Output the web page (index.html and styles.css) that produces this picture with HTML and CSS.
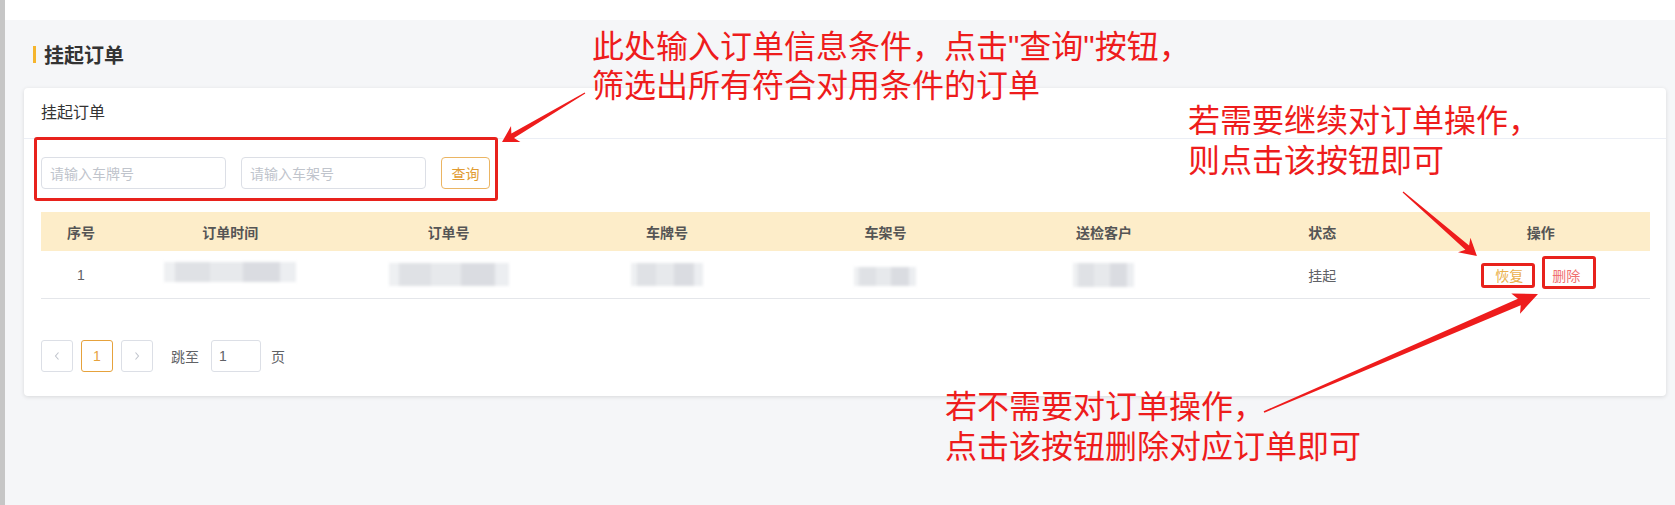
FILE: index.html
```html
<!DOCTYPE html>
<html lang="zh-CN">
<head>
<meta charset="utf-8">
<title>挂起订单</title>
<link rel="stylesheet" href="styles.css">
</head>
<body>
<div class="app">
  <div class="side-stripe"></div>
  <div class="main">
    <div class="topbar"></div>
    <div class="content">
      <h1 class="page-title"><span class="title-bar"></span>挂起订单</h1>
      <section class="card">
        <div class="card-header">挂起订单</div>
        <div class="card-body">
          <div class="search">
            <input class="input" type="text" placeholder="请输入车牌号">
            <input class="input" type="text" placeholder="请输入车架号">
            <button class="btn-query" type="button">查询</button>
          </div>
          <div class="table">
            <div class="tr th">
              <div class="cell">序号</div>
              <div class="cell">订单时间</div>
              <div class="cell">订单号</div>
              <div class="cell">车牌号</div>
              <div class="cell">车架号</div>
              <div class="cell">送检客户</div>
              <div class="cell">状态</div>
              <div class="cell">操作</div>
            </div>
            <div class="tr td">
              <div class="cell">1</div>
              <div class="cell"><span class="blur blur-time"></span></div>
              <div class="cell"><span class="blur blur-order"></span></div>
              <div class="cell"><span class="blur blur-plate"></span></div>
              <div class="cell"><span class="blur blur-vin"></span></div>
              <div class="cell"><span class="blur blur-client"></span></div>
              <div class="cell">挂起</div>
              <div class="cell ops">
                <button class="link link-restore" type="button">恢复</button>
                <button class="link link-delete" type="button">删除</button>
              </div>
            </div>
          </div>
          <div class="pager">
            <button class="pg-btn" type="button"><svg width="8" height="10" viewBox="0 0 8 10"><polyline points="5.5,1.5 2.5,5 5.5,8.5" fill="none" stroke="#c0c4cc" stroke-width="1.1"/></svg></button>
            <button class="pg-btn active" type="button">1</button>
            <button class="pg-btn" type="button"><svg width="8" height="10" viewBox="0 0 8 10"><polyline points="2.5,1.5 5.5,5 2.5,8.5" fill="none" stroke="#c0c4cc" stroke-width="1.1"/></svg></button>
            <span class="jump-label">跳至</span>
            <input class="jump-input" type="text" value="1">
            <span class="jump-unit">页</span>
          </div>
        </div>
      </section>
    </div>
  </div>
</div>

<div class="annotations">
  <div class="note note-1"><div class="note-line">此处输入订单信息条件，点击"查询"按钮，</div><div class="note-line">筛选出所有符合对用条件的订单</div></div>
  <div class="note note-2"><div class="note-line">若需要继续对订单操作，</div><div class="note-line">则点击该按钮即可</div></div>
  <div class="note note-3"><div class="note-line">若不需要对订单操作，</div><div class="note-line">点击该按钮删除对应订单即可</div></div>
  <div class="mark mark-search"></div>
  <div class="mark mark-restore"></div>
  <div class="mark mark-delete"></div>
  <svg class="arrows" width="1675" height="505" viewBox="0 0 1675 505">
    <polygon transform="translate(585,93) rotate(149.4)" points="0,-0.6 84,-2.6 80.5,-9.2 96.4,0 80.5,9.2 84,2.6 0,0.6" fill="#ee1c1c"/>
    <polygon transform="translate(1403,192) rotate(40.9)" points="0,-0.6 85,-2.8 81,-9.5 97.8,0 81,9.5 85,2.8 0,0.6" fill="#ee1c1c"/>
    <polygon transform="translate(1264,412) rotate(-23.3)" points="0,-0.8 278,-3.6 274,-11 298.3,0 274,11 278,3.6 0,0.8" fill="#ee1c1c"/>
  </svg>
</div>
</body>
</html>
```

FILE: styles.css
```css
* { box-sizing: border-box; }

html, body {
  margin: 0;
  padding: 0;
}

body {
  position: relative;
  width: 1675px;
  height: 505px;
  overflow: hidden;
  background: #f5f6f8;
  font-family: "Liberation Sans", "Noto Sans CJK SC", sans-serif;
  color: #606266;
}

.app {
  display: flex;
  height: 505px;
}

.side-stripe {
  flex: none;
  width: 5px;
  background: #c6c6c6;
}

.main {
  flex: 1;
  display: flex;
  flex-direction: column;
}

.topbar {
  height: 20px;
  background: #fff;
}

.content {
  padding: 20px 9px 0 19px;
}

.page-title {
  margin: 0 0 20px 9px;
  height: 28px;
  display: flex;
  align-items: center;
  gap: 8px;
  font-size: 20px;
  font-weight: bold;
  color: #333;
  font-family: "Noto Sans CJK SC", sans-serif;
}

.title-bar {
  width: 3px;
  height: 17px;
  background: #f5b52e;
}

.card {
  background: #fff;
  border-radius: 4px;
  box-shadow: 0 1px 4px rgba(0, 0, 0, 0.12);
}

.card-header {
  height: 51px;
  line-height: 46px;
  padding-left: 17px;
  font-size: 16px;
  color: #333;
  border-bottom: 1px solid #ebeef5;
  font-family: "Noto Sans CJK SC", sans-serif;
}

.card-body {
  padding: 18px 16px 24px 17px;
}

.search {
  display: flex;
  gap: 15px;
}

.input {
  width: 185px;
  height: 32px;
  border: 1px solid #dcdfe6;
  border-radius: 4px;
  padding: 0 8px;
  font-size: 14px;
  font-family: "Noto Sans CJK SC", sans-serif;
  color: #606266;
  outline: none;
  background: #fff;
}

.input::placeholder {
  color: #c0c4cc;
}

.btn-query {
  width: 49px;
  height: 32px;
  border: 1px solid #ebb563;
  border-radius: 4px;
  background: #fff;
  color: #e19b30;
  font-size: 14px;
  font-family: "Noto Sans CJK SC", sans-serif;
  padding: 0;
}

.table {
  margin-top: 23px;
}

.tr {
  display: grid;
  grid-template-columns: 80px repeat(7, 1fr);
  align-items: center;
}

.cell {
  text-align: center;
  font-size: 14px;
  display: flex;
  justify-content: center;
  align-items: center;
}

.th {
  height: 39px;
  background: #fdedc9;
  color: #555;
  font-weight: bold;
}

.td {
  height: 48px;
  border-bottom: 1px solid #e4e6ea;
  color: #606266;
}

.blur {
  display: inline-block;
  filter: blur(1.6px);
  background: linear-gradient(90deg, #eef0f2 0 8%, #dfe1e5 8% 35%, #e7e9ec 35% 60%, #dadce1 60% 88%, #eceef1 88% 100%);
}

.blur-time { width: 132px; height: 20px; margin-top: -5px; }
.blur-order { width: 120px; height: 23px; }
.blur-plate { width: 72px; height: 23px; }
.blur-vin { width: 62px; height: 19px; margin-top: 4px; }
.blur-client { width: 61px; height: 24px; }

.ops {
  gap: 29px;
  padding-right: 6px;
}

.link {
  border: none;
  background: none;
  padding: 0;
  font-size: 14px;
  font-family: "Noto Sans CJK SC", sans-serif;
}

.link-restore { color: #eab04a; }
.link-delete { color: #f07070; }

.pager {
  margin-top: 41px;
  height: 32px;
  display: flex;
  align-items: center;
}

.pg-btn {
  width: 32px;
  height: 32px;
  margin-right: 8px;
  border: 1px solid #dcdfe6;
  border-radius: 3px;
  background: #fff;
  display: flex;
  align-items: center;
  justify-content: center;
  padding: 0;
  font-size: 14px;
  color: #c0c4cc;
  font-family: "Liberation Sans", sans-serif;
}

.pg-btn.active {
  border-color: #e6a23c;
  color: #e6a23c;
}

.jump-label {
  margin-left: 10px;
  margin-right: 12px;
  font-size: 14px;
  color: #606266;
  font-family: "Noto Sans CJK SC", sans-serif;
}

.jump-input {
  width: 50px;
  height: 32px;
  border: 1px solid #dcdfe6;
  border-radius: 3px;
  padding: 0 7px;
  font-size: 14px;
  color: #606266;
  font-family: "Liberation Sans", sans-serif;
  outline: none;
}

.jump-unit {
  margin-left: 10px;
  font-size: 14px;
  color: #606266;
  font-family: "Noto Sans CJK SC", sans-serif;
}

/* annotation overlay */
.annotations {
  position: absolute;
  left: 0;
  top: 0;
  width: 1675px;
  height: 505px;
  pointer-events: none;
}

.note {
  position: absolute;
  display: flex;
  flex-direction: column;
  color: #ee1c1c;
  font-size: 32px;
  white-space: nowrap;
  font-family: "Liberation Sans", "Noto Sans CJK SC", sans-serif;
}

.note-line {
  height: 40px;
  line-height: 40px;
}

.note-1 { left: 592px; top: 28px; }
.note-1 .note-line { height: 39px; line-height: 39px; }
.note-2 { left: 1188px; top: 101px; }
.note-3 { left: 945px; top: 387px; }

.mark {
  position: absolute;
  border: 3px solid #e8221c;
  border-radius: 3px;
}

.mark-search { left: 34px; top: 137px; width: 464px; height: 64px; }
.mark-restore { left: 1481px; top: 263px; width: 54px; height: 25px; }
.mark-delete { left: 1542px; top: 256px; width: 54px; height: 33px; }

.arrows {
  position: absolute;
  left: 0;
  top: 0;
}
```
